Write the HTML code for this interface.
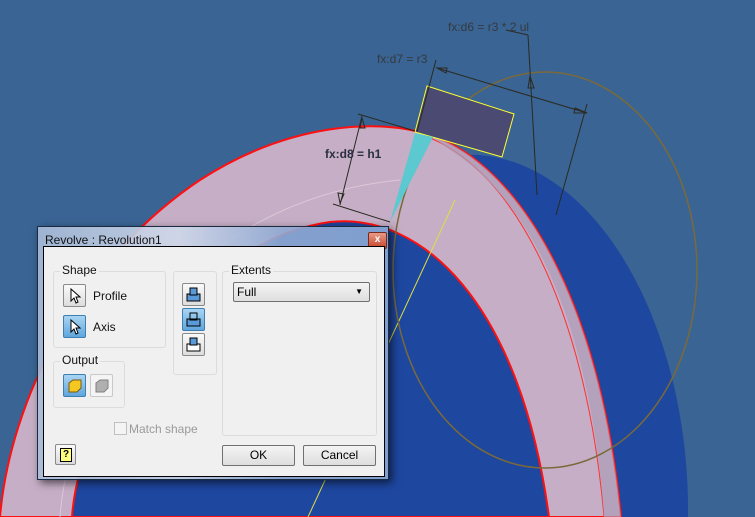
<!DOCTYPE html>
<html><head><style>
body{margin:0;width:755px;height:517px;overflow:hidden;background:#3a6494;font-family:"Liberation Sans",sans-serif;}
svg{position:absolute;left:0;top:0}
.dlg{position:absolute;left:37px;top:226px;width:350px;height:252px;border:1px solid #1a2a40;background:linear-gradient(90deg,rgba(169,188,216,.9),rgba(207,217,234,.9) 40%,rgba(143,169,210,.9) 70%,#7f9fd0);box-shadow:3px 3px 8px rgba(0,0,0,.6)}
.title{position:absolute;left:7px;top:6px;font-size:12px;color:#111}
.close{position:absolute;left:330px;top:5px;width:17px;height:15px;background:linear-gradient(#e89a88,#c8452c);border:1px solid #7a2a1a;border-radius:2px;color:#fff;font-size:10px;font-weight:bold;text-align:center;line-height:14px}
.body{position:absolute;left:5px;top:19px;width:340px;height:229px;background:#f0f0f0;border:1px solid #000}
.grp{position:absolute;border:1px solid #dcdcdc;border-radius:3px}
.lbl{position:absolute;font-size:12px;color:#111;background:#f0f0f0;padding:0 2px}
.btn{position:absolute;width:21px;height:21px;border:1px solid #8a8a8a;border-radius:2px;background:linear-gradient(#fafafa,#dcdcdc)}
.btn.on{background:linear-gradient(#a9d4f3,#5fa6dd);border-color:#3c7fb1}
.t{position:absolute;font-size:12px;color:#111}
.pb{position:absolute;height:19px;border:1px solid #707070;border-radius:2px;background:linear-gradient(#f4f4f4,#dedede);font-size:12px;text-align:center;line-height:19px}
</style></head><body>
<svg width="755" height="517">
<path d="M90,517 C150,300 350,150 480,155 C600,165 690,330 688,517 Z" fill="#1e47a0"/>
<path d="M0,517 C10,400 80,260 200,180 C290,122 380,118 430,135 C520,165 600,300 621,517 Z" fill="#c6aec6" stroke="#ff1010" stroke-width="2"/>
<path d="M430,138 C510,170 585,300 604,517" fill="none" stroke="#ff3030" stroke-width="1"/>
<path d="M450,150 C530,200 590,320 604,517 L621,517 C600,300 520,165 430,135 Z" fill="#ad9cb8" opacity=".7"/>
<path d="M72,517 C80,400 200,240 330,222 C420,212 520,300 549,517 Z" fill="#1e47a0" stroke="#ff1010" stroke-width="2"/>
<path d="M60,517 C70,380 190,200 400,180" fill="none" stroke="#ddc8d8" stroke-width="1"/>
<line x1="308" y1="517" x2="455" y2="200" stroke="#e0e040" stroke-width="1"/>
<ellipse cx="545" cy="270" rx="152" ry="198" fill="none" stroke="#7a6a3a" stroke-width="1.5"/>
<polygon points="427,86 514,114 502,157 415,132" fill="#4a4a72" stroke="#ffff30" stroke-width="1"/>
<polygon points="415,133 433,137 390,222" fill="#5cc8d0"/>
<g stroke="#2a2a20" stroke-width="1" fill="none">
<line x1="437" y1="68" x2="587" y2="113"/><line x1="436" y1="60" x2="417" y2="132"/><line x1="587" y1="104" x2="556" y2="215"/>
<line x1="528" y1="35" x2="537" y2="195"/><line x1="506" y1="30" x2="528" y2="35"/>
<line x1="362" y1="116" x2="340" y2="205"/><line x1="358" y1="114" x2="415" y2="131"/><line x1="333" y1="204" x2="390" y2="222"/>
<polygon points="437,68 447,68 446,73"/><polygon points="587,113 575,108 574,113"/>
<polygon points="362,118 360,128 365,128"/><polygon points="340,203 338,193 344,194"/><polygon points="530,76 528,88 534,88"/>
</g>
<text x="448" y="31" font-size="12" fill="#333a40" font-family="Liberation Sans">fx:d6 = r3 * 2 ul</text>
<text x="377" y="63" font-size="12" fill="#333a40" font-family="Liberation Sans">fx:d7 = r3</text>
<text x="325" y="158" font-size="12" font-weight="bold" fill="#2a3040" font-family="Liberation Sans">fx:d8 = h1</text>
</svg>
<div class="dlg">
<div class="title">Revolve : Revolution1</div>
<div class="close">x</div>
<div class="body">
 <div class="grp" style="left:9px;top:24px;width:111px;height:75px"></div>
 <div class="lbl" style="left:16px;top:16px">Shape</div>
 <div class="btn" style="left:19px;top:37px"><svg width="21" height="21"><path d="M7,4 L7,16 L10,13 L12,18 L14,17 L12,12 L16,12 Z" fill="#fff" stroke="#000"/></svg></div>
 <div class="t" style="left:49px;top:42px">Profile</div>
 <div class="btn on" style="left:19px;top:68px"><svg width="21" height="21"><path d="M7,4 L7,16 L10,13 L12,18 L14,17 L12,12 L16,12 Z" fill="#fff" stroke="#000"/></svg></div>
 <div class="t" style="left:49px;top:73px">Axis</div>
 <div class="grp" style="left:9px;top:114px;width:70px;height:45px"></div>
 <div class="lbl" style="left:16px;top:106px">Output</div>
 <div class="btn on" style="left:19px;top:127px"><svg width="21" height="21"><path d="M5,8 L9,5 L17,5 L17,13 L13,17 L5,17 Z" fill="#f4c820" stroke="#7a5a10"/></svg></div>
 <div class="btn" style="left:46px;top:127px;background:#f4f4f4;border-color:#c8c8c8"><svg width="21" height="21"><path d="M5,8 L9,5 L17,5 L17,13 L13,17 L5,17 Z" fill="#b0b0b0" stroke="#808080"/></svg></div>
 <div class="grp" style="left:129px;top:24px;width:42px;height:102px"></div>
 <div class="btn" style="left:138px;top:36px"><svg width="21" height="21"><rect x="4" y="10" width="13" height="7" fill="#5a9ad8" stroke="#000"/><rect x="7" y="4" width="7" height="7" fill="#5a9ad8" stroke="#000"/></svg></div>
 <div class="btn on" style="left:138px;top:61px"><svg width="21" height="21"><rect x="4" y="10" width="13" height="7" fill="#5a9ad8" stroke="#000"/><rect x="7" y="4" width="7" height="7" fill="none" stroke="#000"/></svg></div>
 <div class="btn" style="left:138px;top:86px"><svg width="21" height="21"><rect x="4" y="10" width="13" height="7" fill="#fff" stroke="#000"/><rect x="7" y="4" width="7" height="7" fill="#5a9ad8" stroke="#000"/></svg></div>
 <div class="grp" style="left:178px;top:24px;width:153px;height:163px"></div>
 <div class="lbl" style="left:185px;top:16px">Extents</div>
 <div class="pb" style="left:189px;top:35px;width:132px;text-align:left;padding-left:3px;height:18px;line-height:18px">Full<span style="position:absolute;right:6px;top:0;font-size:8px">&#9660;</span></div>
 <div style="position:absolute;left:70px;top:175px;width:11px;height:11px;border:1px solid #c0c0c0;background:#f4f4f4"></div>
 <div class="t" style="left:85px;top:175px;color:#9a9a9a">Match shape</div>
 <div class="btn" style="left:11px;top:197px;width:19px;height:19px;background:linear-gradient(#fafafa,#dcdcdc)"><div style="position:absolute;left:4px;top:3px;width:10px;height:12px;background:#ffff80;border:1px solid #000;font-size:10px;font-weight:bold;text-align:center;line-height:12px">?</div></div>
 <div class="pb" style="left:178px;top:198px;width:71px">OK</div>
 <div class="pb" style="left:259px;top:198px;width:71px">Cancel</div>
</div>
</div>
</body></html>
